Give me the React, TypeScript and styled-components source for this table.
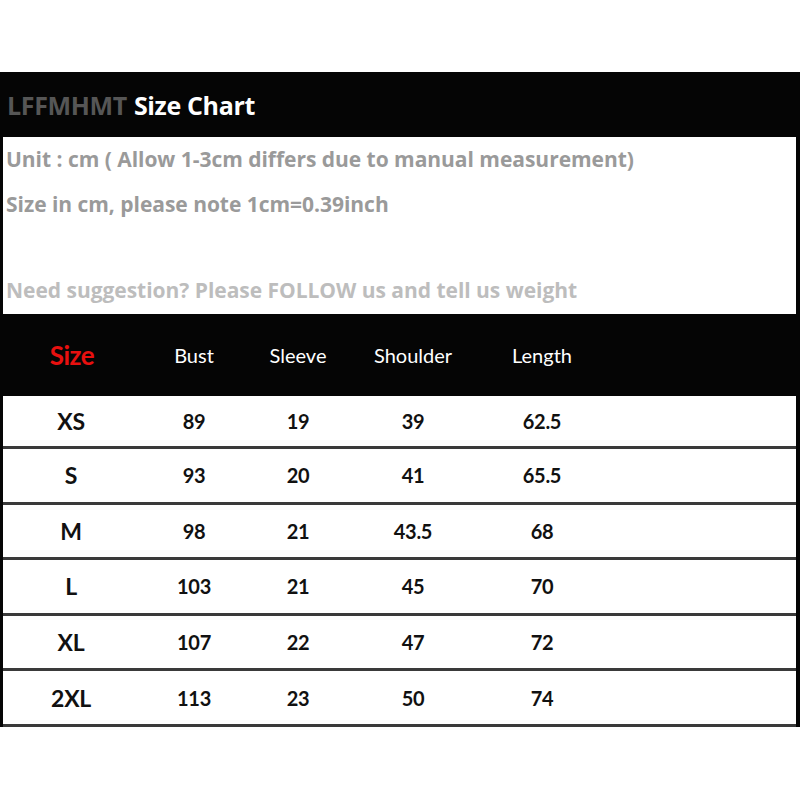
import styled, { createGlobalStyle } from "styled-components";

const GlobalStyle = createGlobalStyle`
  html, body {
    margin: 0;
    padding: 0;
    background: #fff;
  }
  body {
    font-family: "Lato", "Open Sans", sans-serif;
  }
`;

interface SizeRow {
  size: string;
  bust: string;
  sleeve: string;
  shoulder: string;
  length: string;
}

const rows: SizeRow[] = [
  { size: "XS", bust: "89", sleeve: "19", shoulder: "39", length: "62.5" },
  { size: "S", bust: "93", sleeve: "20", shoulder: "41", length: "65.5" },
  { size: "M", bust: "98", sleeve: "21", shoulder: "43.5", length: "68" },
  { size: "L", bust: "103", sleeve: "21", shoulder: "45", length: "70" },
  { size: "XL", bust: "107", sleeve: "22", shoulder: "47", length: "72" },
  { size: "2XL", bust: "113", sleeve: "23", shoulder: "50", length: "74" },
];

const App = () => {
  return (
    <>
      <GlobalStyle />
      <Page>
        <Chart>
          <TitleBar>
            <Brand>LFFMHMT</Brand> Size Chart
          </TitleBar>
          <InfoBox>
            <InfoLine>Unit : cm ( Allow 1-3cm differs due to manual measurement)</InfoLine>
            <InfoLine>Size in cm, please note 1cm=0.39inch</InfoLine>
            <InfoLine $light>Need suggestion? Please FOLLOW us and tell us weight</InfoLine>
          </InfoBox>
          <HeadRow>
            <SizeHead>Size</SizeHead>
            <HeadCell>Bust</HeadCell>
            <HeadCell>Sleeve</HeadCell>
            <HeadCell>Shoulder</HeadCell>
            <HeadCell>Length</HeadCell>
          </HeadRow>
          {rows.map((r, i) => (
            <BodyRow key={r.size} $first={i === 0}>
              <SizeCell>{r.size}</SizeCell>
              <Cell>{r.bust}</Cell>
              <Cell>{r.sleeve}</Cell>
              <Cell>{r.shoulder}</Cell>
              <Cell>{r.length}</Cell>
            </BodyRow>
          ))}
        </Chart>
      </Page>
    </>
  );
};

const Page = styled.div`
  width: 800px;
  height: 800px;
  padding-top: 72px;
  box-sizing: border-box;
  background: #fff;
`;

const Chart = styled.div`
  background: #050505;
  padding: 0 4px 0 3px;
`;

const TitleBar = styled.div`
  height: 65px;
  display: flex;
  align-items: center;
  gap: 7px;
  padding-left: 4px;
  color: #fff;
  font-family: "Open Sans", sans-serif;
  font-size: 25px;
  font-weight: 700;
  letter-spacing: -0.35px;
`;

const Brand = styled.span`
  color: #565656;
`;

const InfoBox = styled.div`
  height: 177px;
  background: #fff;
  display: flex;
  flex-direction: column;
  padding-left: 3px;
`;

const InfoLine = styled.div<{ $light?: boolean }>`
  height: 45px;
  line-height: 45px;
  font-family: "Open Sans", sans-serif;
  font-size: 21px;
  font-weight: 700;
  letter-spacing: -0.03px;
  color: ${(p) => (p.$light ? "#bdbdbd" : "#9a9a9a")};
  white-space: nowrap;

  &:last-child {
    margin-top: auto;
    height: 40px;
    line-height: 40px;
    margin-bottom: 4px;
  }
`;

const columns = "136px 110px 98px 132px 126px 1fr";

const HeadRow = styled.div`
  height: 82px;
  display: grid;
  grid-template-columns: ${columns};
  align-items: center;
`;

const HeadCell = styled.div`
  text-align: center;
  color: #fff;
  font-size: 20px;
  font-weight: 400;
`;

const SizeHead = styled(HeadCell)`
  color: #e8100f;
  font-size: 26px;
  font-weight: 700;
  letter-spacing: -0.5px;
  margin-left: 2px;
`;

const BodyRow = styled.div<{ $first?: boolean }>`
  height: ${(p) => (p.$first ? "50px" : "52.6px")};
  display: grid;
  grid-template-columns: ${columns};
  align-items: center;
  background: #fff;
  border-bottom: 3px solid #3a3a3a;
`;

const Cell = styled.div`
  text-align: center;
  color: #111;
  font-size: 20px;
  font-weight: 700;
  letter-spacing: -0.3px;
`;

const SizeCell = styled(Cell)`
  font-size: 23px;
`;

export default App;
